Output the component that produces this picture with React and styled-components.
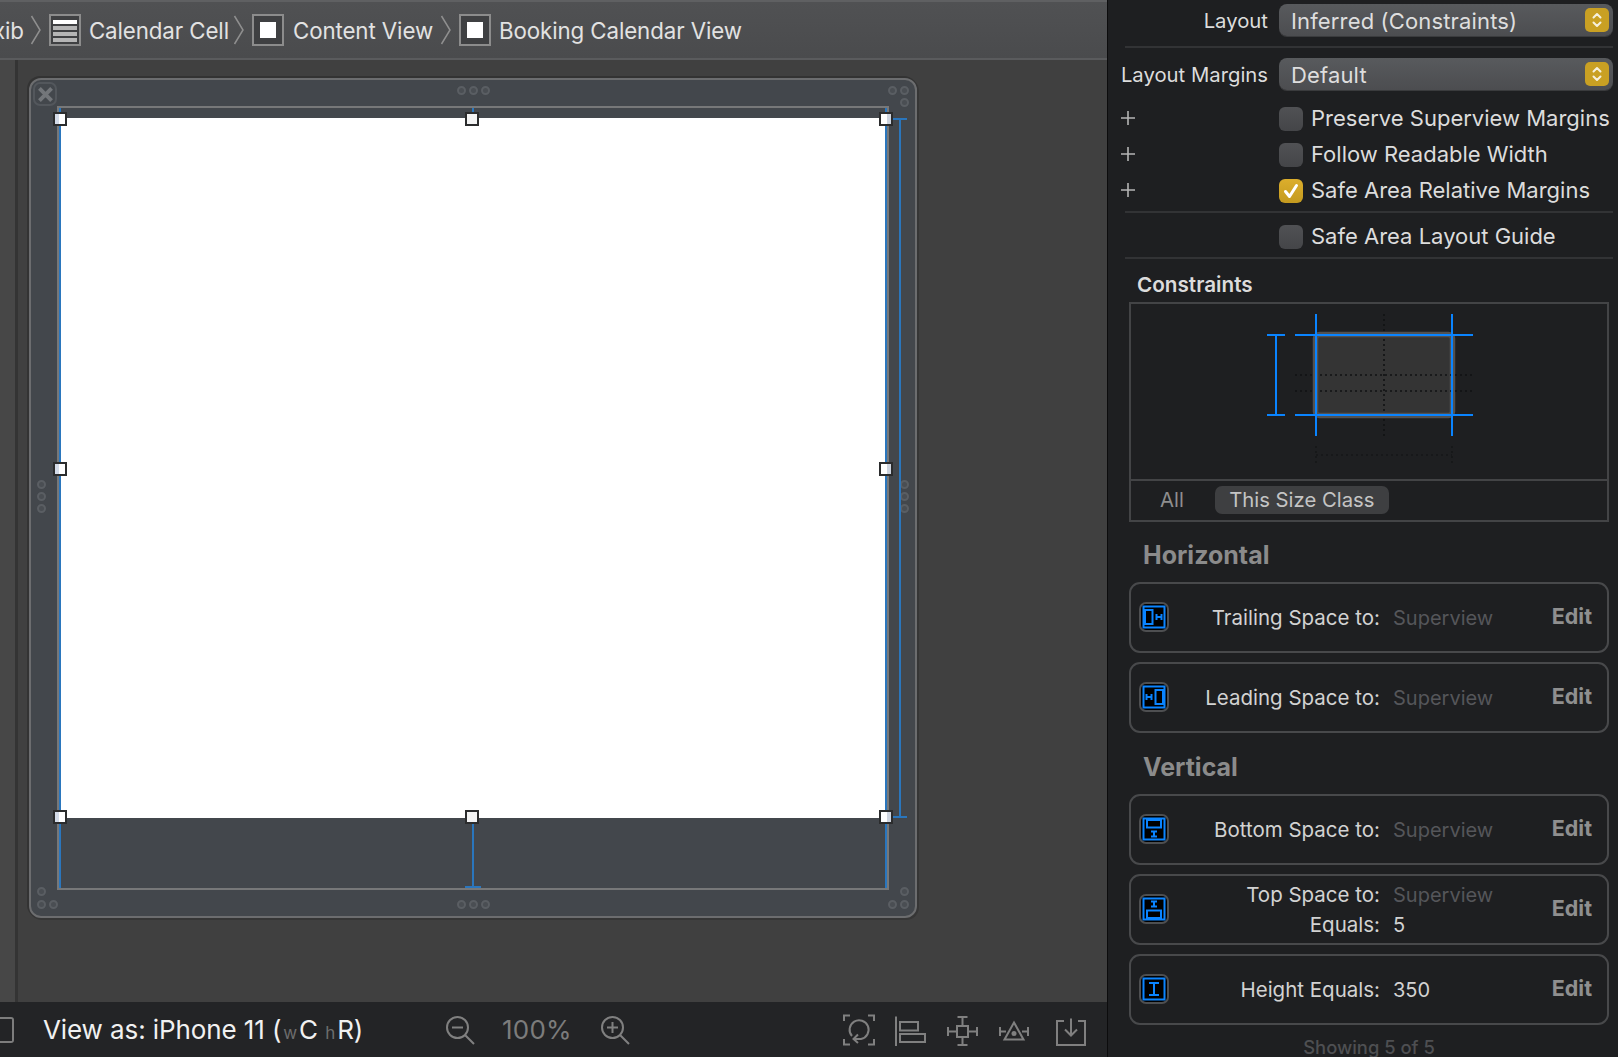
import React from "react";
import styled, { createGlobalStyle } from "styled-components";

const Global = createGlobalStyle`
  html, body { margin: 0; padding: 0; background: #1e1f21; }
  body { font-family: Inter, "Liberation Sans", sans-serif; }
  * { box-sizing: border-box; }
`;

const Shell = styled.div`
  display: flex;
  width: 1618px;
  height: 1057px;
  overflow: hidden;
  background: #1e1f21;
`;

const EditorPane = styled.div`
  width: 1107px;
  height: 100%;
  display: flex;
  flex-direction: column;
  flex: none;
`;

const Divider = styled.div`
  width: 1px;
  flex: none;
  background: #0c0c0d;
`;

const JumpBar = styled.div`
  height: 60px;
  flex: none;
  display: flex;
  align-items: center;
  overflow: hidden;
  background: linear-gradient(#505153, #4a4b4d);
  border-top: 2px solid #5f6062;
  border-bottom: 2px solid #5a5b5d;
  color: #e2e2e2;
  font-size: 22.3px;
  letter-spacing: -0.1px;
  white-space: nowrap;
`;

const Crumb = styled.span`
  display: inline-block;
  margin-left: ${(p) => p.$ml || 0}px;
`;

const Chevron = styled.svg`
  width: 12px;
  height: 30px;
  margin: 0 6px 0 ${(p) => p.$left ?? 6}px;
  flex: none;
`;

const CrumbIconBox = styled.svg`
  width: 32px;
  height: 32px;
  margin: 0 8px 0 1px;
  flex: none;
`;

const Canvas = styled.div`
  flex: 1;
  display: flex;
  background: #404040;
  min-height: 0;
`;

const Gutter = styled.div`
  width: 18px;
  flex: none;
  background: #474747;
  border-right: 3px solid #343434;
`;

const SceneFrame = styled.div`
  position: relative;
  width: 888px;
  height: 840px;
  margin: 18px 0 0 11px;
  background: #43474c;
  border: 2px solid #6c6d6f;
  border-radius: 12px;
  box-shadow: -1px -1px 0 1px #333, 1px 1px 0 1px #363636;
  padding: 26px 0 0 26px;
`;

const CloseBox = styled.div`
  position: absolute;
  left: 2px;
  top: 2px;
  width: 24px;
  height: 24px;
  border-radius: 7px;
  border: 2px solid #53575c;
  display: flex;
  align-items: center;
  justify-content: center;
`;

const CellOutline = styled.div`
  width: 832px;
  height: 784px;
  border: 2px solid #777879;
`;

const ContentEdges = styled.div`
  height: 100%;
  border-left: 2px solid #2a76bd;
  border-right: 2px solid #2a76bd;
  padding-top: 10px;
`;

const WhiteView = styled.div`
  height: 700px;
  background: #fff;
`;

const Handle = styled.div`
  position: absolute;
  left: ${(p) => p.$x}px;
  top: ${(p) => p.$y}px;
  width: 14px;
  height: 14px;
  border: 2px solid #2b2c2d;
  background: ${(p) => p.$fill || "#f4f4f4"};
`;

const Ring = styled.div`
  position: absolute;
  left: ${(p) => p.$x}px;
  top: ${(p) => p.$y}px;
  width: 9px;
  height: 9px;
  border-radius: 50%;
  border: 2.5px solid #5a5e63;
  background: #4a4e53;
`;

const BlueV = styled.div`
  position: absolute;
  left: ${(p) => p.$x}px;
  top: ${(p) => p.$y}px;
  width: 2px;
  height: ${(p) => p.$h}px;
  background: #2a76bd;
`;

const BlueH = styled.div`
  position: absolute;
  left: ${(p) => p.$x}px;
  top: ${(p) => p.$y}px;
  width: ${(p) => p.$w}px;
  height: 2px;
  background: #2a76bd;
`;

const BottomBar = styled.div`
  height: 55px;
  flex: none;
  display: flex;
  align-items: center;
  background: #232426;
  color: #7f7f7f;
`;

const DeviceStub = styled.div`
  width: 15px;
  height: 26px;
  margin-left: -1px;
  border: 2px solid #7d7d7d;
  border-left: 0;
  border-radius: 0 3px 3px 0;
`;

const ViewAs = styled.div`
  margin-left: 29px;
  width: 398px;
  font-size: 26px;
  letter-spacing: -0.1px;
  color: #f1f1f1;
  white-space: nowrap;
`;

const SizeHint = styled.span`
  font-size: 17px;
  color: #6d6d6d;
  margin: ${(p) => p.$m || "0 3px 0 0"};
`;

const ZoomIcon = styled.svg`
  width: 30px;
  height: 30px;
  flex: none;
  margin-left: ${(p) => p.$ml || 0}px;
`;

const ZoomText = styled.div`
  width: 68px;
  margin-left: 27px;
  font-size: 26px;
  color: #7c7c7c;
  letter-spacing: 0.2px;
  white-space: nowrap;
`;

const ToolIcon = styled.svg`
  width: 32px;
  height: 32px;
  flex: none;
  margin-left: ${(p) => p.$ml || 0}px;
`;

const Inspector = styled.div`
  flex: 1;
  min-width: 0;
  background: #1e1f21;
  color: #dcdcdc;
  padding: 4px 0 0 0;
  font-size: 21px;
`;

const FieldRow = styled.div`
  display: grid;
  grid-template-columns: 160px 334px;
  column-gap: 11px;
  align-items: center;
  height: 32px;
  margin-top: ${(p) => p.$mt || 0}px;
`;

const CheckRow = styled(FieldRow)`
  height: 24px;
`;

const FieldLabel = styled.div`
  text-align: right;
  white-space: nowrap;
  font-size: 20.3px;
  color: #dcdcdc;
`;

const PlusMark = styled.svg`
  width: 14px;
  height: 14px;
  margin: -2px 0 0 13px;
  display: block;
`;

const Popup = styled.div`
  position: relative;
  height: 32px;
  border-radius: 8px;
  background: linear-gradient(#585a5d, #4c4d50);
  box-shadow: 0 1px 0 #3a3b3d;
  padding: 1px 0 0 12px;
  display: flex;
  align-items: center;
  font-size: 22px;
  letter-spacing: 0.15px;
  color: #dedede;
  white-space: nowrap;
`;

const Stepper = styled.svg`
  position: absolute;
  right: 4px;
  top: 4px;
  width: 24px;
  height: 24px;
`;

const CheckLine = styled.div`
  display: flex;
  align-items: center;
  gap: 8px;
  white-space: nowrap;
  font-size: 22px;
  color: #dcdcdc;
`;

const CheckText = styled.span`
  margin-top: -1px;
`;

const CheckBox = styled.div`
  width: 24px;
  height: 24px;
  flex: none;
  border-radius: 6px;
  background: ${(p) => (p.$on ? "linear-gradient(#dcae2c, #c49a1f)" : "linear-gradient(#505154, #444548)")};
  display: flex;
  align-items: center;
  justify-content: center;
`;

const Rule = styled.div`
  height: 2px;
  background: #323335;
  margin: ${(p) => p.$m || "0"};
  margin-left: 17px;
  margin-right: 5px;
`;

const SectionTitle = styled.div`
  margin: 13px 0 0 29px;
  height: 30px;
  line-height: 26px;
  font-size: 20.7px;
  font-weight: 600;
  color: #dcdcdc;
`;

const ConstraintBox = styled.div`
  width: 480px;
  height: 220px;
  margin: 0 0 0 21px;
  border: 2px solid #434446;
`;

const DiagramArea = styled.div`
  height: 177px;
  border-bottom: 2px solid #434446;
`;

const Diagram = styled.svg`
  display: block;
  width: 476px;
  height: 175px;
`;

const TabRow = styled.div`
  display: flex;
  align-items: center;
  height: 38px;
  padding-left: 29px;
  font-size: 20.3px;
  color: #8e8e8e;
`;

const TabLabel = styled.span`
  margin-bottom: 2px;
`;

const TabPill = styled.div`
  margin-left: 31px;
  width: 174px;
  height: 28px;
  padding-bottom: 2px;
  border-radius: 7px;
  background: #3e3f41;
  color: #c4c4c4;
  display: flex;
  align-items: center;
  justify-content: center;
`;

const GroupTitle = styled.div`
  margin: ${(p) => p.$mt}px 0 0 35px;
  height: 32px;
  line-height: 32px;
  font-size: 25px;
  font-weight: 700;
  color: #8b8b8b;
`;

const Card = styled.div`
  width: 480px;
  height: 71px;
  margin: ${(p) => p.$mt || 9}px 0 0 21px;
  border: 2px solid #48494b;
  border-radius: 11px;
  display: flex;
  align-items: center;
  padding: 0 15px 0 8px;
`;

const IconChip = styled.svg`
  width: 30px;
  height: 30px;
  flex: none;
  margin-bottom: 1px;
`;

const PairGrid = styled.div`
  width: 372px;
  display: grid;
  grid-template-columns: 211px 1fr;
  column-gap: 13px;
  row-gap: 6px;
  font-size: 20.5px;
  line-height: 24px;
  white-space: nowrap;
`;

const PairLabel = styled.div`
  text-align: right;
  color: #d2d2d2;
`;

const PairValue = styled.div`
  font-size: 20px;
  color: ${(p) => (p.$muted ? "#55565a" : "#d2d2d2")};
`;

const EditLink = styled.div`
  margin-left: auto;
  margin-bottom: 3px;
  font-size: 21.5px;
  font-weight: 700;
  color: #8f8f8f;
`;

const Footnote = styled.div`
  margin-top: 12px;
  text-align: center;
  width: 522px;
  font-size: 18.4px;
  line-height: 20px;
  font-weight: 500;
  color: #4e4f52;
`;

const BLUE = "#0a84ff";

function ListGlyph() {
  return (
    <CrumbIconBox viewBox="0 0 32 32">
      <rect x="1" y="1" width="30" height="30" fill="#3f4042" stroke="#8c8c8c" strokeWidth="2" />
      <rect x="4" y="6" width="24" height="4" fill="#fff" />
      <rect x="4" y="12" width="24" height="4" fill="#b5b5b5" />
      <rect x="4" y="18" width="24" height="4" fill="#b5b5b5" />
      <rect x="4" y="24" width="24" height="4" fill="#b5b5b5" />
    </CrumbIconBox>
  );
}

function ViewGlyph() {
  return (
    <CrumbIconBox viewBox="0 0 32 32">
      <rect x="1" y="1" width="30" height="30" fill="#3f4042" stroke="#8c8c8c" strokeWidth="2" />
      <rect x="8" y="8" width="16" height="16" fill="#fff" />
    </CrumbIconBox>
  );
}

function Sep({ left }) {
  return (
    <Chevron $left={left} viewBox="0 0 12 30">
      <path d="M1.5 1 L10 15 L1.5 29" fill="none" stroke="#8f8f8f" strokeWidth="1.5" />
    </Chevron>
  );
}

function StepGlyph() {
  return (
    <Stepper viewBox="0 0 24 24">
      <rect x="0" y="0" width="24" height="24" rx="5" fill="#c9a023" />
      <path d="M8.5 9.5 L12 6 L15.5 9.5 M8.5 14.5 L12 18 L15.5 14.5" fill="none" stroke="#f6f0dc" strokeWidth="2" strokeLinecap="round" strokeLinejoin="round" />
    </Stepper>
  );
}

function Plus() {
  return (
    <PlusMark viewBox="0 0 14 14">
      <path d="M7 0 V14 M0 7 H14" stroke="#b5b5b5" strokeWidth="1.6" />
    </PlusMark>
  );
}

function ConstraintGlyph({ kind }) {
  const inner = {
    trailing: (
      <>
        <rect x="6" y="8" width="7.5" height="14" />
        <path d="M17.5 15 H22.5 M17.5 12 V18 M22.5 12 V18" />
      </>
    ),
    leading: (
      <>
        <rect x="16.5" y="8" width="7.5" height="14" />
        <path d="M7.5 15 H12.5 M7.5 12 V18 M12.5 12 V18" />
      </>
    ),
    bottom: (
      <>
        <rect x="8" y="6" width="14" height="7.5" />
        <path d="M15 17.5 V22.5 M12 17.5 H18 M12 22.5 H18" />
      </>
    ),
    top: (
      <>
        <rect x="8" y="16.5" width="14" height="7.5" />
        <path d="M15 7.5 V12.5 M12 7.5 H18 M12 12.5 H18" />
      </>
    ),
    height: <path d="M15 9 V21 M10 9 H20 M10 21 H20" />,
  }[kind];
  return (
    <IconChip viewBox="0 0 30 30">
      <rect x="1" y="1" width="28" height="28" rx="6" fill="#000" stroke="#4e4f51" strokeWidth="2" />
      <g fill="none" stroke={BLUE} strokeWidth="2">
        <rect x="4.5" y="4.5" width="21" height="21" />
        {inner}
      </g>
    </IconChip>
  );
}

function ConstraintRow({ kind, rows, mt }) {
  return (
    <Card $mt={mt}>
      <ConstraintGlyph kind={kind} />
      <PairGrid>
        {rows.map(([label, value, muted]) => (
          <React.Fragment key={label}>
            <PairLabel>{label}</PairLabel>
            <PairValue $muted={muted}>{value}</PairValue>
          </React.Fragment>
        ))}
      </PairGrid>
      <EditLink>Edit</EditLink>
    </Card>
  );
}

const dotSets = [
  [459, 88], [471, 88], [483, 88],
  [890, 88], [902, 88], [902, 100],
  [39, 482], [39, 494], [39, 506],
  [902, 482], [902, 494], [902, 506],
  [39, 889], [39, 902], [51, 902],
  [459, 902], [471, 902], [483, 902],
  [890, 902], [902, 902], [902, 889],
];

function SceneOverlay() {
  const ox = 31;
  const oy = 80;
  const sideFillL = "linear-gradient(90deg,#d3dbe8 0,#d3dbe8 45%,#fff 45%)";
  const sideFillR = "linear-gradient(90deg,#fff 0,#fff 55%,#cfd5e0 55%)";
  const handles = [
    [53, 112, sideFillL], [465, 112], [879, 112, sideFillR],
    [53, 462, sideFillL], [879, 462, sideFillR],
    [53, 810, sideFillL], [465, 810], [879, 810, sideFillR],
  ];
  return (
    <>
      {dotSets.map(([x, y]) => (
        <Ring key={`${x}-${y}`} $x={x - ox - 2} $y={y - oy - 2} />
      ))}
      <BlueV $x={899 - ox} $y={119 - oy} $h={698} />
      <BlueH $x={893 - ox} $y={118 - oy} $w={14} />
      <BlueH $x={893 - ox} $y={816 - oy} $w={14} />
      <BlueV $x={472 - ox} $y={108 - oy} $h={10} />
      <BlueV $x={472 - ox} $y={818 - oy} $h={70} />
      <BlueH $x={465 - ox} $y={886 - oy} $w={16} />
      {handles.map(([x, y, f]) => (
        <Handle key={`${x}-${y}`} $x={x - ox} $y={y - oy} $fill={f} />
      ))}
    </>
  );
}

function ConstraintDiagram() {
  return (
    <Diagram viewBox="0 0 476 175">
      <rect x="184.5" y="30.5" width="137" height="81" rx="4" fill="#343434" stroke="#525252" strokeWidth="5.5" />
      <g stroke="#111213" strokeWidth="1.6" strokeDasharray="2 3">
        <path d="M253 10 V132" />
        <path d="M164 71 H342 M164 87 H342" />
        <path d="M185 142 V161 M321 142 V161 M185 151 H321" opacity="0.6" />
      </g>
      <g stroke={BLUE} strokeWidth="2" fill="none">
        <path d="M185 10 V132 M321 10 V132 M164 31 H342 M164 111 H342" />
        <path d="M136 31 H154 M136 111 H154 M145 31 V111" />
      </g>
    </Diagram>
  );
}

export default function App() {
  return (
    <Shell>
      <Global />
      <EditorPane>
        <JumpBar>
          <Crumb $ml={-7}>xib</Crumb>
          <Sep />
          <ListGlyph />
          <Crumb>Calendar Cell</Crumb>
          <Sep left={4} />
          <ViewGlyph />
          <Crumb $ml={1}>Content View</Crumb>
          <Sep left={7} />
          <ViewGlyph />
          <Crumb>Booking Calendar View</Crumb>
        </JumpBar>
        <Canvas>
          <Gutter />
          <SceneFrame>
            <CloseBox>
              <svg width="17" height="17" viewBox="0 0 14 14">
                <path d="M2 2 L12 12 M12 2 L2 12" stroke="#73767a" strokeWidth="3.2" />
              </svg>
            </CloseBox>
            <CellOutline>
              <ContentEdges>
                <WhiteView />
              </ContentEdges>
            </CellOutline>
            <SceneOverlay />
          </SceneFrame>
        </Canvas>
        <BottomBar>
          <DeviceStub />
          <ViewAs>
            View as: iPhone 11 (<SizeHint $m="0 2px 0 2px">w</SizeHint>C <SizeHint $m="0 2px 0 0">h</SizeHint>R)
          </ViewAs>
          <ZoomIcon $ml={4} viewBox="0 0 30 30">
            <g fill="none" stroke="#808080" strokeWidth="2">
              <circle cx="12.5" cy="12.5" r="10.5" />
              <path d="M7 12.5 H18 M20 20 L29 29" />
            </g>
          </ZoomIcon>
          <ZoomText>100%</ZoomText>
          <ZoomIcon $ml={30} viewBox="0 0 30 30">
            <g fill="none" stroke="#808080" strokeWidth="2">
              <circle cx="12.5" cy="12.5" r="10.5" />
              <path d="M7 12.5 H18 M12.5 7 V18 M20 20 L29 29" />
            </g>
          </ZoomIcon>
          <ToolIcon $ml={213} viewBox="0 0 32 32">
            <g fill="none" stroke="#808080" strokeWidth="2">
              <path d="M1 7 V1.5 H7 M25 1.5 H31 V7 M1 25 V30.5 H7 M25 30.5 H31 V25" />
              <path d="M9 22 A9.5 9.5 0 1 1 18 25 H11 M15 20.5 L10.5 25 L15 29" />
            </g>
          </ToolIcon>
          <ToolIcon $ml={20} viewBox="0 0 32 32">
            <g fill="none" stroke="#808080" strokeWidth="2">
              <path d="M1 2.5 V32" />
              <rect x="5" y="8" width="18" height="8.5" />
              <rect x="5" y="20" width="25" height="8" />
            </g>
          </ToolIcon>
          <ToolIcon $ml={20} viewBox="0 0 32 32">
            <g fill="none" stroke="#808080" strokeWidth="2">
              <rect x="10" y="12" width="11" height="11" />
              <path d="M15.5 3 V12 M10.5 3 H20.5 M15.5 23 V31 M10.5 31 H20.5 M1 13 V22 M1 17.5 H10 M21 17.5 H30 M30 13 V22" />
            </g>
          </ToolIcon>
          <ToolIcon $ml={20} viewBox="0 0 32 32">
            <g fill="none" stroke="#808080" strokeWidth="2">
              <path d="M15 8.5 L24.5 25.5 H5.5 Z" />
              <path d="M1 13 V22 M1 17.5 H7 M23 17.5 H29 M29 13 V22" />
            </g>
            <circle cx="15" cy="19.5" r="2.5" fill="#808080" />
          </ToolIcon>
          <ToolIcon $ml={24} viewBox="0 0 32 32">
            <g fill="none" stroke="#808080" strokeWidth="2">
              <path d="M9 7 H2 V31 H30 V7 H23" />
              <path d="M16 4.5 V21.5 M10 15.5 L16 21.5 L22 15.5" />
            </g>
          </ToolIcon>
        </BottomBar>
      </EditorPane>
      <Divider />
      <Inspector>
        <FieldRow>
          <FieldLabel>Layout</FieldLabel>
          <Popup>
            Inferred (Constraints)
            <StepGlyph />
          </Popup>
        </FieldRow>
        <Rule $m="10px 0 0" />
        <FieldRow $mt={10}>
          <FieldLabel>Layout Margins</FieldLabel>
          <Popup>
            Default
            <StepGlyph />
          </Popup>
        </FieldRow>
        <CheckRow $mt={16}>
          <Plus />
          <CheckLine>
            <CheckBox />
            <CheckText>Preserve Superview Margins</CheckText>
          </CheckLine>
        </CheckRow>
        <CheckRow $mt={12}>
          <Plus />
          <CheckLine>
            <CheckBox />
            <CheckText>Follow Readable Width</CheckText>
          </CheckLine>
        </CheckRow>
        <CheckRow $mt={12}>
          <Plus />
          <CheckLine>
            <CheckBox $on>
              <svg width="18" height="18" viewBox="0 0 18 18">
                <path d="M3.5 9.5 L7.5 14.5 L14.5 3.5" fill="none" stroke="#fff" strokeWidth="3" strokeLinecap="round" strokeLinejoin="round" />
              </svg>
            </CheckBox>
            <CheckText>Safe Area Relative Margins</CheckText>
          </CheckLine>
        </CheckRow>
        <Rule $m="9px 0 0" />
        <CheckRow $mt={11}>
          <span />
          <CheckLine>
            <CheckBox />
            <CheckText>Safe Area Layout Guide</CheckText>
          </CheckLine>
        </CheckRow>
        <Rule $m="9px 0 0" />
        <SectionTitle>Constraints</SectionTitle>
        <ConstraintBox>
          <DiagramArea>
            <ConstraintDiagram />
          </DiagramArea>
          <TabRow>
            <TabLabel>All</TabLabel>
            <TabPill>This Size Class</TabPill>
          </TabRow>
        </ConstraintBox>
        <GroupTitle $mt={17}>Horizontal</GroupTitle>
        <ConstraintRow kind="trailing" mt={11} rows={[["Trailing Space to:", "Superview", true]]} />
        <ConstraintRow kind="leading" rows={[["Leading Space to:", "Superview", true]]} />
        <GroupTitle $mt={18}>Vertical</GroupTitle>
        <ConstraintRow kind="bottom" mt={11} rows={[["Bottom Space to:", "Superview", true]]} />
        <ConstraintRow kind="top" rows={[["Top Space to:", "Superview", true], ["Equals:", "5"]]} />
        <ConstraintRow kind="height" rows={[["Height Equals:", "350"]]} />
        <Footnote>Showing 5 of 5</Footnote>
      </Inspector>
    </Shell>
  );
}
